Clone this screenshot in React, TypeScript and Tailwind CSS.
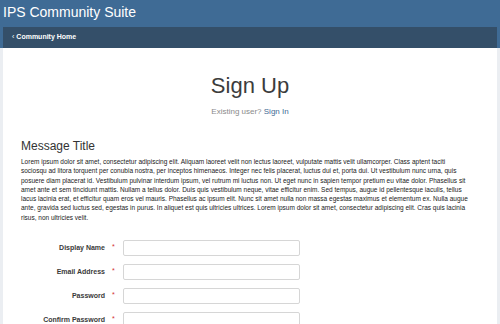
import React from "react";

// lines broken the way the reference wraps them
const paragraphLines = [
    "Lorem ipsum dolor sit amet, consectetur adipiscing elit. Aliquam laoreet velit non lectus laoreet, vulputate mattis velit ullamcorper. Class aptent taciti",
    "sociosqu ad litora torquent per conubia nostra, per inceptos himenaeos. Integer nec felis placerat, luctus dui et, porta dui. Ut vestibulum nunc urna, quis",
    "posuere diam placerat id. Vestibulum pulvinar interdum ipsum, vel rutrum mi luctus non. Ut eget nunc in sapien tempor pretium eu vitae dolor. Phasellus sit",
    "amet ante et sem tincidunt mattis. Nullam a tellus dolor. Duis quis vestibulum neque, vitae efficitur enim. Sed tempus, augue id pellentesque iaculis, tellus",
    "lacus lacinia erat, et efficitur quam eros vel mauris. Phasellus ac ipsum elit. Nunc sit amet nulla non massa egestas maximus et elementum ex. Nulla augue",
    "ante, gravida sed luctus sed, egestas in purus. In aliquet est quis ultricies ultrices. Lorem ipsum dolor sit amet, consectetur adipiscing elit. Cras quis lacinia",
    "risus, non ultricies velit.",
];

const fields = ["Display Name", "Email Address", "Password", "Confirm Password"];

export default function App() {
    return (
        <div className="w-[500px] h-[324px] overflow-hidden bg-[#ebeef2] font-['Liberation_Sans',Arial,sans-serif]">
            {/* header */}
            <header className="bg-[#3f6b95]">
                <div className="h-[27px] px-[3px] pt-[5px] text-white text-[14px] leading-[14px]">
                    IPS Community Suite
                </div>
                <div className="mx-[3px] h-[21px] bg-[#344f69] flex items-center pl-[9px] text-white text-[7px] font-bold">
                    <span className="mr-[2px] font-normal">‹</span>
                    Community Home
                </div>
            </header>

            {/* content panel */}
            <main className="mx-[3px] bg-white h-[276px] pt-[25px]">
                <div className="text-center">
                    <h1 className="text-[22px] leading-[26px] text-[#3c3c3c]">Sign Up</h1>
                    <p className="mt-[8px] text-[8px] leading-[10px] text-[#8a8a8a]">
                        Existing user? <span className="text-[#3f6b95]">Sign In</span>
                    </p>
                </div>

                <section className="px-[18px] mt-[22px]">
                    <h2 className="text-[12px] leading-[14px] text-[#333]">Message Title</h2>
                    <div className="mt-[4px] text-[6.5px] leading-[9.3px] text-[#222]">
                        {paragraphLines.map((line, i) => (
                            <p key={i} className="whitespace-nowrap">
                                {line}
                            </p>
                        ))}
                    </div>
                </section>

                <form className="mt-[18px] flex flex-col gap-[8px]">
                    {fields.map((label) => (
                        <div key={label} className="flex items-center h-[16px]">
                            <label className="w-[102px] text-right text-[7px] font-bold text-[#3a3a3a]">
                                {label}
                            </label>
                            <span className="w-[18px] pl-[7px] self-start pt-[3px] text-[7px] leading-none text-[#d32f2f]">
                                *
                            </span>
                            <input
                                type="text"
                                className="w-[177px] h-[16px] border border-[#d6d6d6] rounded-[2px] bg-white"
                            />
                        </div>
                    ))}
                </form>
            </main>
        </div>
    );
}
